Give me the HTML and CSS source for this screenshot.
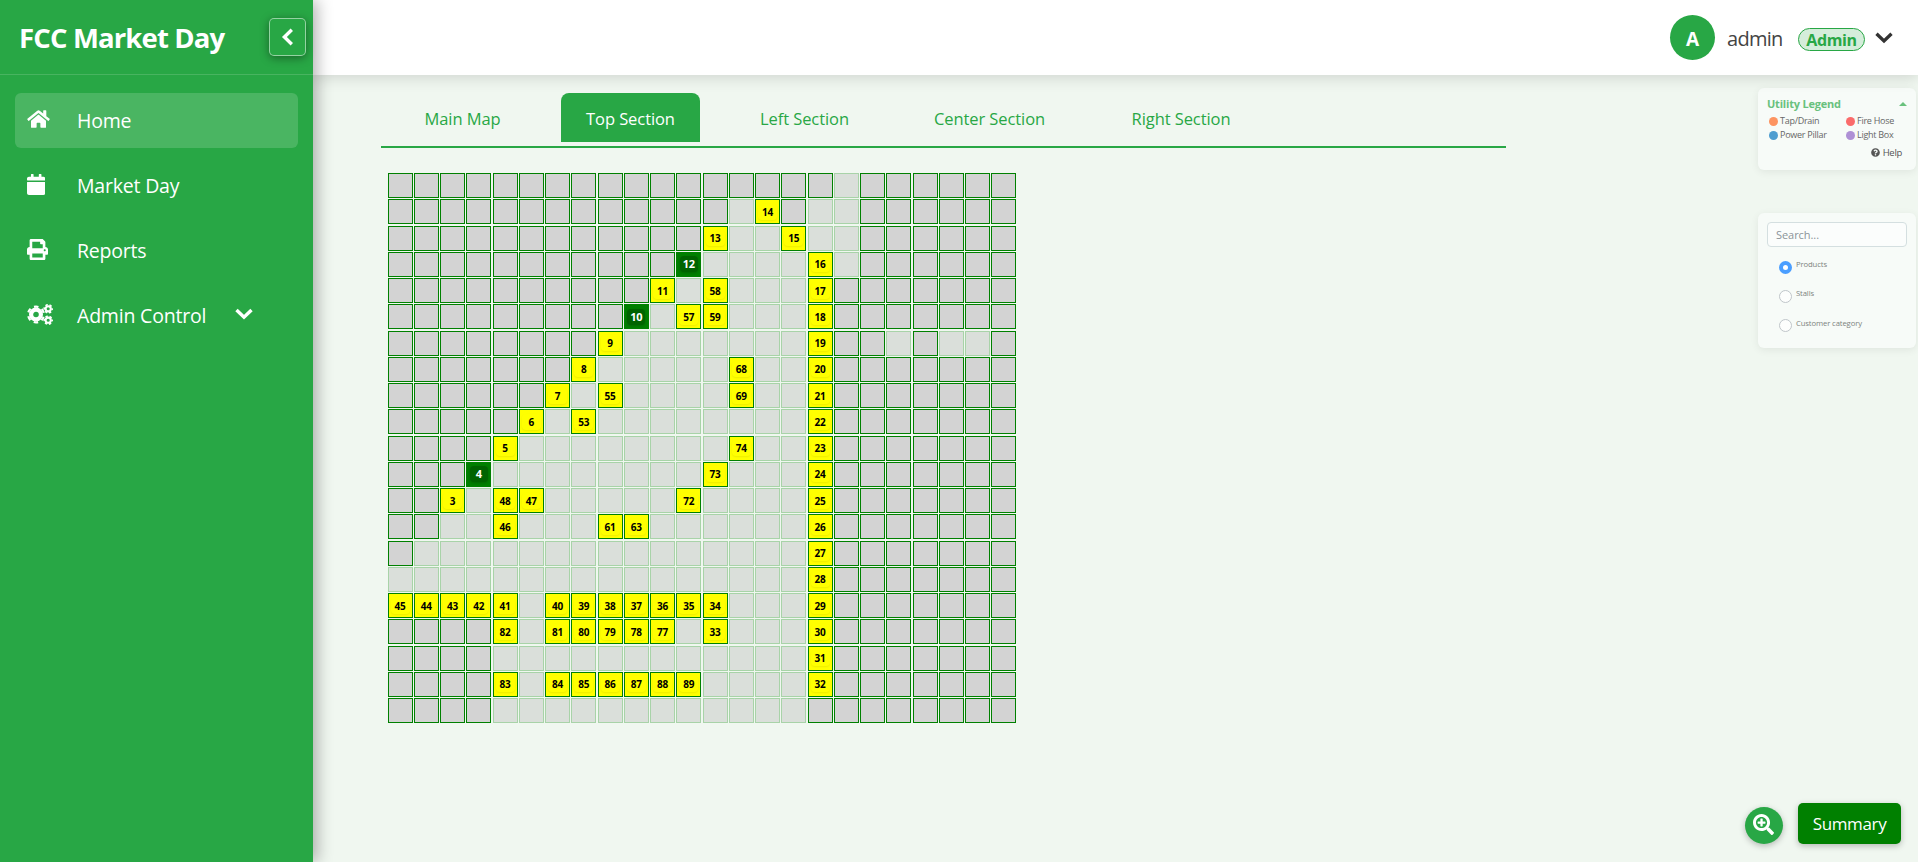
FILE: index.html
```html
<!DOCTYPE html>
<html lang="en">
<head>
<meta charset="utf-8">
<title>FCC Market Day</title>
<link rel="stylesheet" href="styles.css">
</head>
<body>
<div class="app">
  <aside class="sidebar">
    <div class="brand">
      <span class="brand-name">FCC Market Day</span>
      <button class="toggle" aria-label="Collapse">
        <svg width="13" height="18" viewBox="0 0 13 18"><path d="M10.8 1.8 3.4 9l7.4 7.2" fill="none" stroke="#fff" stroke-width="3.4"/></svg>
      </button>
    </div>
    <nav class="nav">
      <a class="nav-item active"><span class="nav-icon"><svg width="23" height="20" viewBox="0 0 576 512"><path d="M280.37 148.26L96 300.11V464a16 16 0 0 0 16 16l112.06-.29a16 16 0 0 0 15.92-16V368a16 16 0 0 1 16-16h64a16 16 0 0 1 16 16v95.64a16 16 0 0 0 16 16.05L464 480a16 16 0 0 0 16-16V300L295.67 148.26a12.19 12.19 0 0 0-15.3 0zM571.6 251.47L488 182.56V44.05a12 12 0 0 0-12-12h-56a12 12 0 0 0-12 12v72.61L318.47 43a48 48 0 0 0-61 0L4.34 251.47a12 12 0 0 0-1.6 16.9l25.5 31A12 12 0 0 0 45.15 301l235.22-193.74a12.19 12.19 0 0 1 15.3 0L530.9 301a12 12 0 0 0 16.9-1.6l25.5-31a12 12 0 0 0-1.7-16.93z"/></svg></span><span class="nav-text">Home</span></a>
      <a class="nav-item"><span class="nav-icon"><svg width="18.4" height="21" viewBox="0 0 448 512"><path d="M12 192h424c6.6 0 12 5.4 12 12v260c0 26.5-21.5 48-48 48H48c-26.5 0-48-21.5-48-48V204c0-6.6 5.4-12 12-12zm436-44v-36c0-26.5-21.5-48-48-48h-48V12c0-6.6-5.4-12-12-12h-40c-6.6 0-12 5.4-12 12v52H160V12c0-6.6-5.4-12-12-12h-40c-6.6 0-12 5.4-12 12v52H48C21.5 64 0 85.5 0 112v36c0 6.6 5.4 12 12 12h424c6.6 0 12-5.4 12-12z"/></svg></span><span class="nav-text">Market Day</span></a>
      <a class="nav-item"><span class="nav-icon"><svg width="21" height="21" viewBox="0 0 512 512"><path d="M448 192V77.25c0-8.49-3.37-16.62-9.37-22.63L393.37 9.37c-6-6-14.14-9.37-22.63-9.37H96C78.33 0 64 14.33 64 32v160c-35.35 0-64 28.65-64 64v112c0 8.84 7.16 16 16 16h48v96c0 17.67 14.33 32 32 32h320c17.67 0 32-14.33 32-32v-96h48c8.84 0 16-7.16 16-16V256c0-35.35-28.65-64-64-64zm-64 256H128v-96h256v96zm0-224H128V64h192v48c0 8.84 7.16 16 16 16h48v96zm48 72c-13.25 0-24-10.75-24-24 0-13.26 10.75-24 24-24s24 10.74 24 24c0 13.25-10.75 24-24 24z"/></svg></span><span class="nav-text">Reports</span></a>
      <a class="nav-item"><span class="nav-icon"><svg width="26" height="21" viewBox="0 0 26 21" fill="none" stroke="#fff"><circle cx="9" cy="10.5" r="4.9" stroke-width="4.2"/><circle cx="9" cy="10.5" r="7.9" stroke-width="2.2" stroke-dasharray="4.4 3.873" stroke-dashoffset="2.2" transform="rotate(30 9 10.5)"/><circle cx="21.2" cy="4.8" r="2.6" stroke-width="2.1"/><circle cx="21.2" cy="4.8" r="4" stroke-width="1.6" stroke-dasharray="2.4 1.789" stroke-dashoffset="1.2"/><circle cx="21.2" cy="16.2" r="2.6" stroke-width="2.1"/><circle cx="21.2" cy="16.2" r="4" stroke-width="1.6" stroke-dasharray="2.4 1.789" stroke-dashoffset="1.2"/></svg></span><span class="nav-text wide">Admin Control</span><svg class="nav-caret" width="18" height="12" viewBox="0 0 18 12"><path d="M1.5 2 9 9.2 16.5 2" fill="none" stroke="#fff" stroke-width="3.4"/></svg></a>
    </nav>
  </aside>
  <div class="page">
    <header class="topbar">
      <span class="avatar">A</span>
      <span class="user">admin</span>
      <span class="role">Admin</span>
      <svg width="18" height="12" viewBox="0 0 18 12"><path d="M1.5 1.8 9 9 16.5 1.8" fill="none" stroke="#333" stroke-width="3.3"/></svg>
    </header>
    <main class="main">
      <section class="map">
        <div class="tabs">
          <span class="tab w1"><b>Main Map</b></span>
          <span class="tab w2 selected"><b>Top Section</b></span>
          <span class="tab w3"><b>Left Section</b></span>
          <span class="tab w4"><b>Center Section</b></span>
          <span class="tab w5"><b>Right Section</b></span>
        </div>
        <div class="grid" id="grid"></div>
      </section>
      <aside class="panels">
        <div class="card legend">
          <div class="legend-head"><span class="legend-title">Utility Legend</span><svg width="8" height="4" viewBox="0 0 8 4"><path d="M0 4 4 0l4 4z" fill="#69c17d"/></svg></div>
          <div class="legend-items">
            <span class="li"><i class="dot orange"></i>Tap/Drain</span>
            <span class="li"><i class="dot red"></i>Fire Hose</span>
            <span class="li"><i class="dot blue"></i>Power Pillar</span>
            <span class="li"><i class="dot purple"></i>Light Box</span>
          </div>
          <div class="help"><svg width="9" height="9" viewBox="0 0 512 512"><path fill="#555" d="M504 256c0 136.997-111.043 248-248 248S8 392.997 8 256C8 119.083 119.043 8 256 8s248 111.083 248 248zM262.655 90c-54.497 0-89.255 22.957-116.549 63.758-3.536 5.286-2.353 12.415 2.715 16.258l34.699 26.31c5.205 3.947 12.621 3.008 16.665-2.122 17.864-22.658 30.113-35.797 57.303-35.797 20.429 0 45.698 13.148 45.698 32.958 0 14.976-12.363 22.667-32.534 33.976C247.128 238.528 216 254.941 216 296v4c0 6.627 5.373 12 12 12h56c6.627 0 12-5.373 12-12v-1.333c0-28.462 83.186-29.647 83.186-106.667 0-58.002-60.165-102-116.531-102zM256 338c-25.365 0-46 20.635-46 46 0 25.364 20.635 46 46 46s46-20.636 46-46c0-25.365-20.635-46-46-46z"/></svg><span>Help</span></div>
        </div>
        <div class="card search">
          <div class="field">Search...</div>
          <div class="opt"><i class="radio on"></i><span>Products</span></div>
          <div class="opt"><i class="radio"></i><span>Stalls</span></div>
          <div class="opt"><i class="radio"></i><span>Customer category</span></div>
        </div>
      </aside>
    </main>
    <div class="actions">
      <span class="zoom"><svg width="21" height="21" viewBox="0 0 512 512"><path fill="#fff" d="M304 192v32c0 6.6-5.4 12-12 12h-56v56c0 6.6-5.4 12-12 12h-32c-6.6 0-12-5.4-12-12v-56h-56c-6.6 0-12-5.4-12-12v-32c0-6.6 5.4-12 12-12h56v-56c0-6.6 5.4-12 12-12h32c6.6 0 12 5.4 12 12v56h56c6.6 0 12 5.4 12 12zm201 284.7L476.7 505c-9.4 9.4-24.6 9.4-33.9 0L343 405.3c-4.5-4.5-7-10.6-7-17V372c-35.3 27.6-79.7 44-128 44C93.1 416 0 322.9 0 208S93.1 0 208 0s208 93.1 208 208c0 48.3-16.4 92.7-44 128h16.3c6.4 0 12.5 2.5 17 7l99.7 99.7c9.3 9.4 9.3 24.6 0 34zM344 208c0-75.2-60.8-136-136-136S72 132.8 72 208s60.8 136 136 136 136-60.8 136-136z"/></svg></span>
      <span class="summary">Summary</span>
    </div>
  </div>
</div>
<script src="script.js"></script>
</body>
</html>
```

FILE: styles.css
```css
* { box-sizing: border-box; }
body { margin: 0; font-family: "Open Sans", "Noto Sans", sans-serif; background: #f0f7f0; overflow: hidden; }
svg { display: block; flex: none; }
.app { display: flex; height: 862px; }

.sidebar { width: 313px; flex: none; background: #28a745; color: #fff; position: relative; z-index: 3; box-shadow: 4px 0 15px rgba(0,0,0,.3); }
.brand { height: 75px; border-bottom: 1px solid rgba(255,255,255,.15); display: flex; justify-content: space-between; padding: 18px 7px 0 19px; }
.brand-name { font-size: 27.5px; font-weight: 700; line-height: 40px; letter-spacing: -.85px; white-space: nowrap; }
.toggle { width: 37px; height: 38px; padding: 0 0 1px; background: #28a745; border: 1px solid rgba(255,255,255,.5); border-radius: 5px; box-shadow: 0 2px 10px rgba(0,0,0,.4); display: flex; align-items: center; justify-content: center; }
.nav { padding: 18px 15px; display: flex; flex-direction: column; gap: 10px; }
.nav-item { height: 55px; border-radius: 6px; display: flex; align-items: center; padding-left: 12px; }
.nav-item.active { background: rgba(255,255,255,.16); }
.nav-icon { width: 50px; fill: #fff; }
.nav-icon svg { margin-top: -3px; }
.nav-text { font-size: 19.5px; line-height: 26px; padding-top: 1px; white-space: nowrap; letter-spacing: -.2px; }
.nav-text.wide { width: 158px; }
.nav-caret { margin-top: -3px; }

.page { flex: 1; display: flex; flex-direction: column; position: relative; }
.topbar { height: 75px; background: #fff; box-shadow: 0 2px 15px rgba(0,0,0,.15); display: flex; align-items: center; justify-content: flex-end; padding: 0 25px 0 0; position: relative; z-index: 2; }
.avatar { width: 45px; height: 45px; border-radius: 50%; background: #28a745; color: #fff; font-weight: 700; font-size: 19px; line-height: 49px; text-align: center; }
.user { width: 83px; padding-left: 12px; font-size: 20px; color: #444; line-height: 26px; padding-top: 3px; letter-spacing: -.7px; }
.role { width: 67px; height: 23px; border: 1px solid #28a745; border-radius: 12px; background: #d4edda; color: #28a745; font-size: 16px; font-weight: 700; line-height: 22px; text-align: center; margin: 3px 10px 0 0; letter-spacing: -.4px; }

.main { flex: 1; display: flex; justify-content: space-between; padding-left: 68px; }
.map { width: 1125px; padding-top: 18px; }
.tabs { height: 55px; border-bottom: 2px solid #28a745; display: flex; align-items: flex-start; gap: 35px; padding-left: 18px; }
.tab { height: 49px; display: flex; align-items: center; justify-content: center; color: #28a745; border-radius: 8px 8px 0 0; font-size: 16.5px; letter-spacing: -.08px; white-space: nowrap; padding-top: 1px; }
.tab b { font-weight: 400; }
.tab.selected { background: #28a745; color: #fff; }
.w1 { width: 127px; }
.w2 { width: 139px; }
.w3 { width: 139px; }
.w4 { width: 161px; }
.w5 { width: 152px; }

.grid { display: grid; grid-template-columns: repeat(24, 25px); grid-auto-rows: 25px; gap: 1.25px; padding: 25.1px 0 0 6.6px; }
.cell { background: #d3d3d3; border: 1px solid #008000; display: flex; align-items: center; justify-content: center; }
.cell.path { background: #dadfda; border-color: #a8d3a8; }
.cell.stall { background: #ff0; color: #000; }
.cell.booked { background: #008000; color: #fff; }
.tag { font-size: 10px; font-weight: 700; line-height: 16px; width: 19px; height: 16px; border-radius: 4px; text-align: center; box-shadow: 0 1px 2px rgba(0,0,0,.08); letter-spacing: -.15px; }
.booked .tag { width: 18px; height: 16px; background: #006400; font-size: 11px; line-height: 15px; box-shadow: 0 1px 3px rgba(0,0,0,.2); }

.panels { width: 160px; padding: 13px 2px 0 0; display: flex; flex-direction: column; gap: 43px; }
.card { width: 158px; border-radius: 6px; background: #f7fbf8; box-shadow: 0 2px 8px rgba(0,0,0,.07); }
.legend { height: 82px; padding: 8px 9px 0; }
.legend-head { display: flex; justify-content: space-between; align-items: center; height: 15px; }
.legend-title { font-size: 11px; font-weight: 700; color: #69c17d; letter-spacing: -.2px; line-height: 15px; white-space: nowrap; }
.legend-items { display: grid; grid-template-columns: 77px 1fr; grid-auto-rows: 14px; padding: 3px 0 0 1px; }
.li { display: flex; align-items: center; gap: 2px; font-size: 9px; color: #666; letter-spacing: -.27px; line-height: 14px; padding-left: 1px; white-space: nowrap; }
.dot { width: 9px; height: 9px; border-radius: 50%; flex: none; }
.orange { background: #fd9461; }
.red { background: #fa6b6b; }
.blue { background: #4f9dd0; }
.purple { background: #ae90d5; }
.help { display: flex; justify-content: flex-end; align-items: center; gap: 3px; font-size: 9.5px; color: #555; height: 14px; margin-top: 3px; padding-right: 5px; letter-spacing: -.3px; }
.search { height: 135px; padding: 9px 9px 0; }
.field { height: 25px; border: 1px solid #d4dfe0; border-radius: 4px; background: #fbfdfc; color: #8b9499; font-size: 11px; line-height: 24px; padding-left: 8px; letter-spacing: -.05px; margin-bottom: 8px; }
.opt { height: 29.3px; display: flex; align-items: flex-start; gap: 4px; padding: 3px 0 0 12px; font-size: 7.7px; line-height: 12px; color: #7d8380; letter-spacing: -.12px; white-space: nowrap; }
.radio { width: 13px; height: 13px; margin-top: 2.7px; border: 1px solid #c0c6ca; border-radius: 50%; background: #fdfefd; flex: none; }
.radio.on { border: 4px solid #4a9eff; background: #fff; }

.actions { position: absolute; right: 17px; bottom: 18px; display: flex; align-items: flex-end; gap: 15px; }
.zoom { width: 38px; height: 37px; border-radius: 50%; background: #28a745; display: flex; align-items: center; justify-content: center; box-shadow: 0 2px 6px rgba(0,0,0,.25); }
.zoom svg { margin: -2px 2px 0 0; }
.summary { width: 103px; height: 41px; border-radius: 5px; background: #008000; color: #fff; font-size: 17px; line-height: 42px; text-align: center; box-shadow: 0 2px 6px rgba(0,0,0,.25); letter-spacing: -.35px; }
```

FILE: script.js
```js
// '#' = blocked, '.' = walkway, number = stall, '*' prefix = booked stall, 'xN' = repeat
const rows = [
  '#x17 . #x6',
  '#x13 . 14 # . . #x6',
  '#x12 13 . . 15 . . #x6',
  '#x11 *12 .x4 16 . #x6',
  '#x10 11 . 58 .x3 17 #x7',
  '#x9 *10 . 57 59 .x3 18 #x7',
  '#x8 9 .x7 19 # # . # . . #',
  '#x7 8 .x5 68 . . 20 #x7',
  '#x6 7 . 55 .x4 69 . . 21 #x7',
  '#x5 6 . 53 .x8 22 #x7',
  '#x4 5 .x8 74 . . 23 #x7',
  '#x3 *4 .x8 73 .x3 24 #x7',
  '#x2 3 . 48 47 .x5 72 .x4 25 #x7',
  '#x2 . . 46 .x3 61 63 .x6 26 #x7',
  '# .x15 27 #x7',
  '.x16 28 #x7',
  '45 44 43 42 41 . 40 39 38 37 36 35 34 .x3 29 #x7',
  '#x4 82 . 81 80 79 78 77 . 33 .x3 30 #x7',
  '#x4 .x12 31 #x7',
  '#x4 83 . 84 85 86 87 88 89 .x4 32 #x7',
  '#x4 .x12 #x8'
];
const grid = document.getElementById('grid');
for (const token of rows.join(' ').split(' ')) {
  const [kind, count] = token.split('x');
  for (let i = 0; i < Number(count || 1); i++) {
    const cell = document.createElement('div');
    cell.className = 'cell';
    if (kind === '.') {
      cell.classList.add('path');
    } else if (kind !== '#') {
      cell.classList.add(kind[0] === '*' ? 'booked' : 'stall');
      const tag = document.createElement('span');
      tag.className = 'tag';
      tag.textContent = kind.replace('*', '');
      cell.append(tag);
    }
    grid.append(cell);
  }
}
```
